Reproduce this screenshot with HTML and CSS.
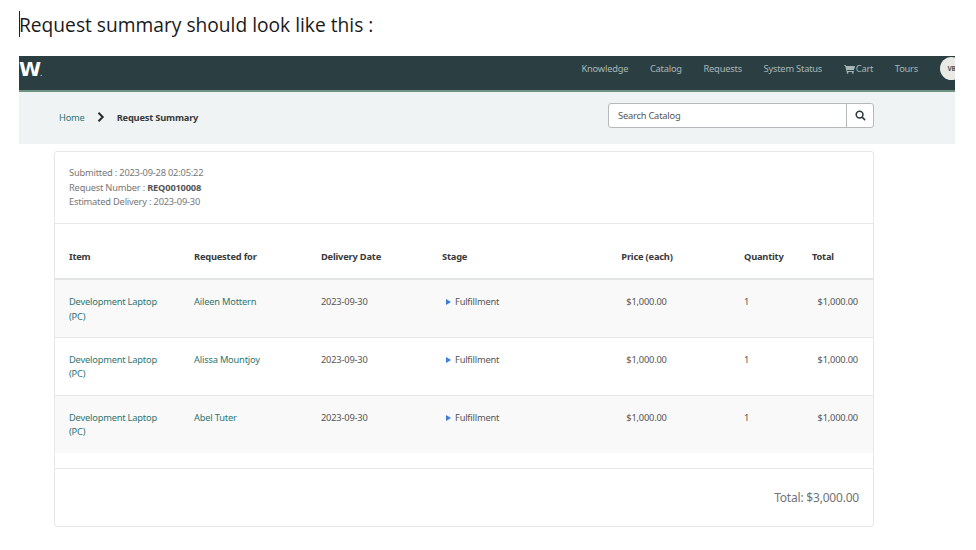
FILE: index.html
```html
<!DOCTYPE html>
<html lang="en">
<head>
    <meta charset="UTF-8">
    <meta name="viewport" content="width=device-width, initial-scale=1.0">
    <title>Request Summary</title>
    <link rel="stylesheet" href="styles.css">
</head>
<body>
    <h1 class="note"><span class="note-text">Request summary should look like this :</span></h1>

    <div class="portal">
        <nav class="navbar">
            <span class="logo">W<span class="logo-dot">.</span></span>
            <ul class="nav-links">
                <li>Knowledge</li>
                <li>Catalog</li>
                <li>Requests</li>
                <li>System Status</li>
                <li class="nav-cart">
                    <svg class="cart-icon" viewBox="0 0 16 14" aria-hidden="true">
                        <path d="M0 1h2.6l.5 1.6H16l-1.4 6H4.6l.3 1.4h9.4v1.2H3.9L1.7 2.2H0z"/>
                        <circle cx="5.2" cy="12.6" r="1.3"/>
                        <circle cx="12.8" cy="12.6" r="1.3"/>
                    </svg>
                    Cart
                </li>
                <li>Tours</li>
            </ul>
            <span class="avatar">VB</span>
        </nav>

        <div class="crumbs">
            <div class="crumb-links">
                <a class="link" href="#">Home</a>
                <svg class="crumb-sep" viewBox="0 0 8 10" aria-hidden="true">
                    <path d="M1.5 0.8 5.7 5 1.5 9.2"/>
                </svg>
                <strong>Request Summary</strong>
            </div>
            <div class="search">
                <input class="search-input" type="text" placeholder="Search Catalog">
                <button class="search-btn" aria-label="Search">
                    <svg viewBox="0 0 12 12" aria-hidden="true">
                        <circle cx="5" cy="5" r="3.7"/>
                        <path d="M7.8 7.8 11 11"/>
                    </svg>
                </button>
            </div>
        </div>

        <div class="card">
            <div class="meta">
                <div>Submitted : 2023-09-28 02:05:22</div>
                <div>Request Number : <b>REQ0010008</b></div>
                <div>Estimated Delivery : 2023-09-30</div>
            </div>

            <table class="items">
                <colgroup>
                    <col class="col-item">
                    <col class="col-for">
                    <col class="col-date">
                    <col class="col-stage">
                    <col class="col-price">
                    <col class="col-qty">
                    <col class="col-total">
                </colgroup>
                <thead>
                    <tr>
                        <th>Item</th>
                        <th>Requested for</th>
                        <th>Delivery Date</th>
                        <th>Stage</th>
                        <th class="center">Price (each)</th>
                        <th>Quantity</th>
                        <th>Total</th>
                    </tr>
                </thead>
                <tbody>
                    <tr>
                        <td><a class="link" href="#">Development Laptop (PC)</a></td>
                        <td><a class="link" href="#">Aileen Mottern</a></td>
                        <td>2023-09-30</td>
                        <td><span class="stage">Fulfillment</span></td>
                        <td class="center">$1,000.00</td>
                        <td>1</td>
                        <td class="right">$1,000.00</td>
                    </tr>
                    <tr>
                        <td><a class="link" href="#">Development Laptop (PC)</a></td>
                        <td><a class="link" href="#">Alissa Mountjoy</a></td>
                        <td>2023-09-30</td>
                        <td><span class="stage">Fulfillment</span></td>
                        <td class="center">$1,000.00</td>
                        <td>1</td>
                        <td class="right">$1,000.00</td>
                    </tr>
                    <tr>
                        <td><a class="link" href="#">Development Laptop (PC)</a></td>
                        <td><a class="link" href="#">Abel Tuter</a></td>
                        <td>2023-09-30</td>
                        <td><span class="stage">Fulfillment</span></td>
                        <td class="center">$1,000.00</td>
                        <td>1</td>
                        <td class="right">$1,000.00</td>
                    </tr>
                </tbody>
            </table>

            <div class="grand-total">Total: $3,000.00</div>
        </div>
    </div>
</body>
</html>
```

FILE: styles.css
```css
* {
    box-sizing: border-box;
}

body {
    margin: 0;
    padding: 0 21px 0 19px;
    background: #fff;
    font-family: "Noto Sans", sans-serif;
    font-size: 9.3px;
    letter-spacing: -0.2px;
    color: #555;
}

.note {
    margin: 0;
    height: 56px;
    padding-top: 12px;
    font-family: "Open Sans", sans-serif;
    font-size: 19.2px;
    font-weight: 400;
    line-height: 26px;
    letter-spacing: 0;
    color: #1a1a1a;
}

.note-text {
    display: inline-block;
    height: 26px;
}

.note-text::before {
    content: "";
    display: inline-block;
    width: 1px;
    height: 26px;
    margin: -1px -1px 0 0;
    vertical-align: top;
    background: #222;
}

.portal {
    overflow: hidden;
}

.navbar {
    display: flex;
    align-items: center;
    height: 36px;
    padding-bottom: 9px;
    background: #2b3f42;
    border-bottom: 2px solid #6d9382;
    overflow: hidden;
}

.logo {
    font-family: "DejaVu Sans", sans-serif;
    font-size: 20px;
    font-weight: 700;
    letter-spacing: 0;
    color: #fff;
}

.logo-dot {
    margin-left: -1px;
    font-size: 6px;
    color: #b9c4c4;
}

.nav-links {
    display: flex;
    gap: 21.6px;
    margin: 0 22px 0 auto;
    padding: 0;
    list-style: none;
    color: #a9b6b7;
}

.nav-cart {
    display: flex;
    align-items: center;
    gap: 1px;
}

.cart-icon {
    width: 11px;
    height: 10px;
    fill: #a9b6b7;
}

.avatar {
    flex: none;
    display: flex;
    align-items: center;
    justify-content: center;
    width: 23px;
    height: 23px;
    margin-right: -8px;
    border-radius: 50%;
    background: #e9e9e6;
    color: #4a5557;
    font-size: 6.5px;
    font-weight: 700;
}

.crumbs {
    display: flex;
    align-items: center;
    height: 52px;
    padding: 0 81px 2px 40px;
    background: #eff3f4;
}

.crumb-links {
    display: flex;
    align-items: center;
}

.crumb-links strong {
    color: #3a3a3a;
}

.crumb-sep {
    width: 8px;
    height: 10px;
    margin: 0 12px 0 12px;
    fill: none;
    stroke: #2b2b2b;
    stroke-width: 2;
}

.link {
    color: #2f7570;
    text-decoration: none;
}

.search {
    display: flex;
    width: 266px;
    height: 25px;
    margin: 0 0 3px auto;
    background: #fff;
    border: 1px solid #b4b9bb;
    border-radius: 3px;
}

.search-input {
    flex: 1;
    min-width: 0;
    padding: 0 9px;
    border: 0;
    background: transparent;
    font: inherit;
    letter-spacing: inherit;
    outline: none;
}

.search-input::placeholder {
    color: #555;
    opacity: 1;
}

.search-btn {
    display: flex;
    align-items: center;
    justify-content: center;
    width: 27px;
    padding: 0;
    border: 0;
    border-left: 1px solid #b4b9bb;
    background: transparent;
}

.search-btn svg {
    width: 11px;
    height: 11px;
    fill: none;
    stroke: #2b3a3d;
    stroke-width: 1.7;
}

.card {
    width: 820px;
    margin: 7px 0 0 35px;
    border: 1px solid #e6e8e8;
    border-radius: 3px;
}

.meta {
    height: 72px;
    padding: 14px 14px 0;
    border-bottom: 1px solid #e8eaea;
    line-height: 14.6px;
    color: #777;
}

.meta b {
    color: #555;
}

.items {
    width: 100%;
    table-layout: fixed;
    border-collapse: collapse;
}

.col-item { width: 125px; }
.col-for { width: 127px; }
.col-date { width: 121px; }
.col-stage { width: 136px; }
.col-price { width: 166px; }
.col-qty { width: 68px; }

.items th {
    height: 55px;
    padding: 10px 14px 0;
    border-bottom: 2px solid #e3e5e5;
    text-align: left;
    font-weight: 700;
    color: #3a3a3a;
}

.items td {
    height: 58px;
    padding: 15px 15px 8px 14px;
    vertical-align: top;
    line-height: 14.5px;
    border-bottom: 1px solid #e6e8e8;
}

.items tbody tr:nth-child(odd) {
    background: #f9f9f9;
}

.items tbody tr:last-child td {
    border-bottom: 0;
}

.items .center {
    text-align: center;
}

.items .right {
    text-align: right;
}

.stage {
    display: inline-flex;
    align-items: center;
    gap: 4px;
}

.stage::before {
    content: "";
    margin-left: 4px;
    border-left: 5px solid #3c7dd6;
    border-top: 3.5px solid transparent;
    border-bottom: 3.5px solid transparent;
}

.grand-total {
    height: 58px;
    margin-top: 15px;
    padding: 20px 14px 0;
    border-top: 1px solid #e8eaea;
    text-align: right;
    font-size: 12px;
    color: #737373;
}
```
